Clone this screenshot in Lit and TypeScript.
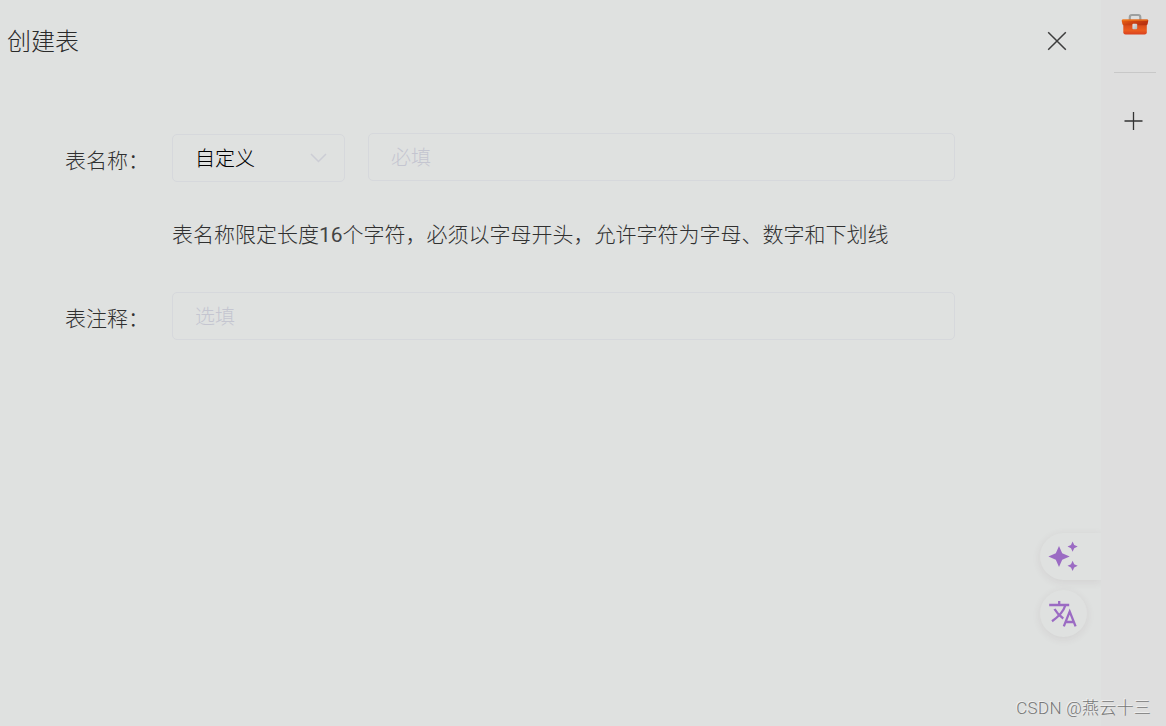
import { LitElement, html, css } from "lit";
import { customElement } from "lit/decorators.js";

@customElement("side-rail")
class SideRail extends LitElement {
  static styles = css`
    :host {
      display: flex;
      flex-direction: column;
      align-items: center;
      box-sizing: border-box;
      width: 65px;
      height: 100%;
      padding-left: 3px;
      background: #dedede;
    }
    svg { display: block; }
    .tools { margin-top: 11px; }
    .line { width: 42px; height: 1px; margin-top: 33px; background: #c8c8c8; }
    .plus { margin-top: 38px; margin-right: 3px; }
  `;
  render() {
    return html`
      <svg class="tools" width="28" height="28" viewBox="0 0 28 28">
        <defs>
          <linearGradient id="lid" x1="0" x2="1" y1="0" y2="0.5">
            <stop offset="0" stop-color="#f06a13" />
            <stop offset="0.5" stop-color="#cf4411" />
            <stop offset="1" stop-color="#b9320f" />
          </linearGradient>
          <linearGradient id="body" x1="0" x2="0" y1="0" y2="1">
            <stop offset="0" stop-color="#d5491a" />
            <stop offset="0.6" stop-color="#eb5c1f" />
            <stop offset="1" stop-color="#d9401f" />
          </linearGradient>
          <linearGradient id="clasp" x1="0" x2="1" y1="0" y2="1">
            <stop offset="0" stop-color="#e8e8e8" />
            <stop offset="1" stop-color="#aeb6b8" />
          </linearGradient>
        </defs>
        <path d="M8.800 9V6.200Q8.800 4 11 4h6.200Q19.300 4 19.300 6.200V9" fill="none" stroke="#9d9f9f" stroke-width="2.200" />
        <path d="M2.300 13h23.500v8.300Q25.800 23.500 23.600 23.500H4.600Q2.300 23.500 2.300 21.300z" fill="url(#body)" />
        <path d="M2 8.500h24q1.300 0 1.300 1.300L26.600 13q-.3 1.200-1.500 1.200H2.900Q1.700 14.200 1.400 13L.7 9.800q0-1.300 1.300-1.300z" fill="url(#lid)" />
        <path d="M1.500 9.100h25" stroke="#f28020" stroke-width="1" />
        <rect x="11.400" y="12.700" width="4.800" height="5.500" rx="1" fill="url(#clasp)" />
      </svg>
      <div class="line"></div>
      <svg class="plus" width="19" height="20" viewBox="0 0 19 20">
        <path d="M.5 10h18M9.500 1v18" stroke="#333" stroke-width="1.300" />
      </svg>
    `;
  }
}

@customElement("app-root")
class AppRoot extends LitElement {
  static styles = css`
    :host {
      display: flex;
      position: relative;
      width: 1166px;
      height: 726px;
      overflow: hidden;
      background: #dfe1e0;
      color: #303030;
      font-family: "Liberation Sans", "Noto Sans CJK SC", sans-serif;
      font-weight: 300;
    }
    svg { display: block; }
    .panel {
      flex: 1;
      display: flex;
      flex-direction: column;
    }
    .head {
      display: flex;
      align-items: center;
      justify-content: space-between;
      height: 82px;
      padding: 0 34px 0 7px;
      box-sizing: border-box;
    }
    .title { padding-top: 2px; font-size: 24px; line-height: 32px; color: #2a2a2a; }
    .form {
      display: grid;
      grid-template-columns: 107px 783px;
      padding: 51px 0 0 65px;
      font-size: 21px;
    }
    .label { height: 48px; line-height: 48px; padding-top: 4px; box-sizing: border-box; }
    .label.low { padding-top: 3px; }
    .row { display: flex; align-items: flex-start; gap: 23px; height: 49px; }
    .field {
      display: flex;
      align-items: center;
      justify-content: space-between;
      flex: 1;
      box-sizing: border-box;
      height: 48px;
      padding: 1px 17px 0 22px;
      border: 1px solid #d6d8dc;
      border-radius: 5px;
      color: #c4c5d0;
      font-size: 20px;
      line-height: 46px;
    }
    .field span { margin-top: 1px; }
    .field svg { margin-top: -2px; }
    .select { flex: 0 0 173px; margin-top: 1px; color: #000; }
    .hint {
      grid-column: 2;
      height: 32px;
      margin: 37px 0 41px;
      line-height: 32px;
      white-space: nowrap;
      font-family: Roboto, "Noto Sans CJK SC", sans-serif;
    }
    .num { font-weight: 400; color: #444; }
    .floating {
      position: absolute;
      right: 65px;
      top: 533px;
      width: 61px;
      display: flex;
      flex-direction: column;
      gap: 10px;
    }
    .pill, .round {
      display: flex;
      box-sizing: border-box;
      height: 47px;
      padding: 7px 0 0 8px;
      background: #dfe1e0;
      box-shadow: 0 2px 9px rgba(90, 60, 70, 0.09);
    }
    .pill { border-radius: 24px 0 0 24px; }
    .round { width: 47px; padding-top: 8px; border-radius: 50%; }
    side-rail { position: relative; }
    .mark {
      position: absolute;
      right: 15px;
      bottom: 6px;
      font-family: Roboto, "Noto Sans CJK SC", sans-serif;
      font-size: 17px;
      letter-spacing: 0.3px;
      margin-right: -0.3px;
      line-height: 24px;
      color: #777;
      text-shadow: -1px -1px 0 #f0f0f0;
      white-space: nowrap;
    }
  `;
  render() {
    return html`
      <main class="panel">
        <header class="head">
          <div class="title">创建表</div>
          <svg width="20" height="20" viewBox="0 0 20 20">
            <path d="M1.200 1.200l17.600 17.600M18.800 1.200L1.200 18.800" stroke="#3d3d3d" stroke-width="1.500" />
          </svg>
        </header>
        <section class="form">
          <div class="label">表名称：</div>
          <div class="row">
            <div class="field select">
              <span>自定义</span>
              <svg width="17" height="10" viewBox="0 0 17 10">
                <path d="M1 1l7.500 7.500L16 1" fill="none" stroke="#cccdd5" stroke-width="1.500" />
              </svg>
            </div>
            <div class="field"><span>必填</span></div>
          </div>
          <div class="hint">表名称限定长度<span class="num">16</span>个字符，必须以字母开头，允许字符为字母、数字和下划线</div>
          <div class="label low">表注释：</div>
          <div class="row"><div class="field"><span>选填</span></div></div>
        </section>
      </main>
      <div class="floating">
        <div class="pill">
          <svg width="32" height="32" viewBox="0 0 32 32" fill="#9b6bc3">
            <path d="M11 6l3.200 7.300 7.500 3.200-7.500 3.200L11 27l-3.200-7.300L.4 16.500l7.400-3.200z" />
            <path d="M24.600 1.500l1.600 3.500 3.500 1.600-3.500 1.600-1.600 3.500L23 8.200l-3.500-1.600L23 5z" />
            <path d="M24.600 20.700l1.600 3.500 3.500 1.600-3.500 1.600-1.600 3.500-1.600-3.500-3.500-1.600 3.500-1.600z" />
          </svg>
        </div>
        <div class="round">
          <svg width="32" height="32" viewBox="0 0 32 32" fill="none" stroke="#9b6bc3" stroke-width="2.300">
            <path d="M1.200 7h20M11.200 3v4M17.300 7.500C15.500 13.500 10 19 4 23.300M6.500 11C8.500 14.500 11 17.500 15.300 20.500" />
            <path d="M15.800 28.400L21.700 13.600 27.600 28.400M17.600 24h8.200" />
          </svg>
        </div>
      </div>
      <side-rail></side-rail>
      <div class="mark">CSDN @燕云十三</div>
    `;
  }
}
